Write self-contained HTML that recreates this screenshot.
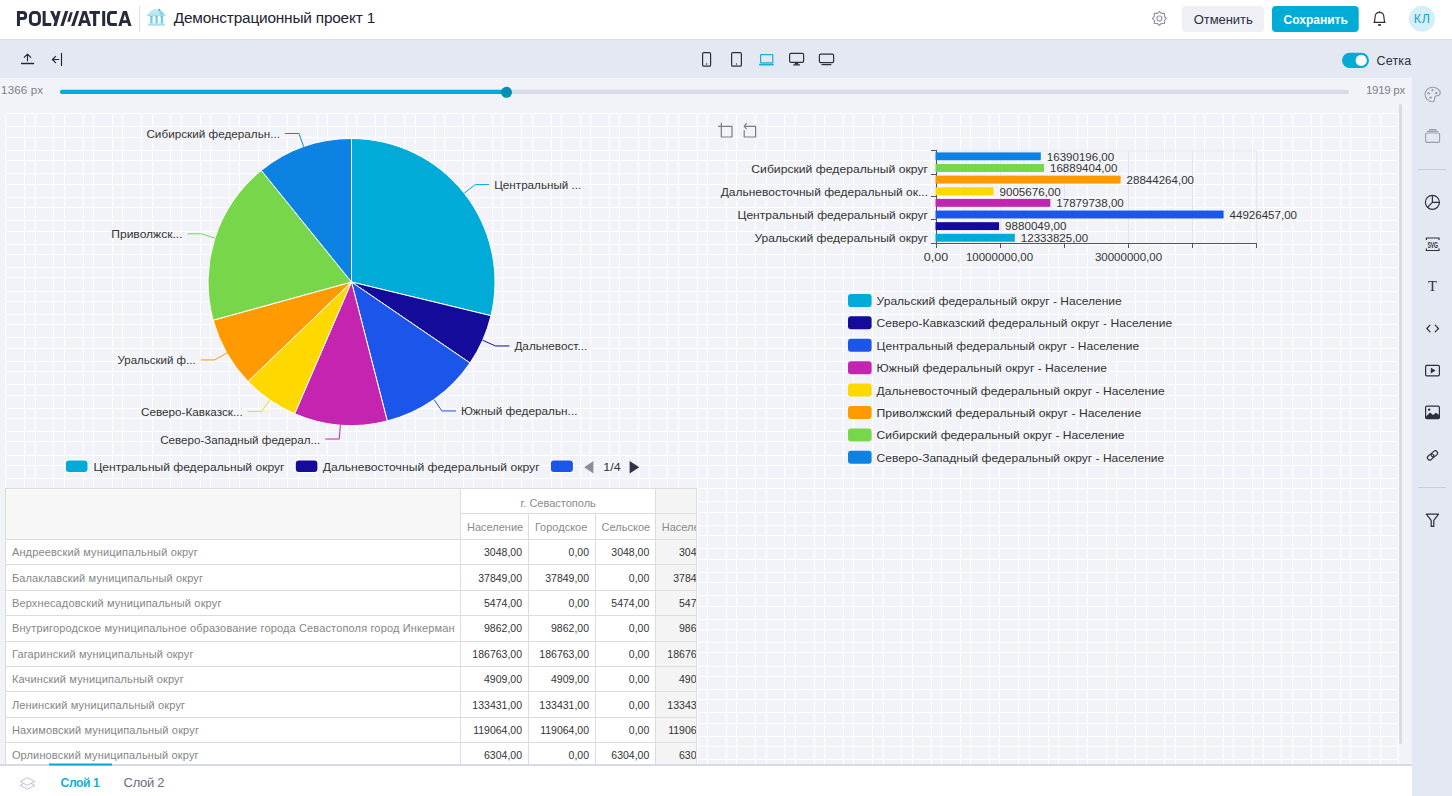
<!DOCTYPE html><html><head><meta charset="utf-8"><style>
*{margin:0;padding:0;box-sizing:border-box}
html,body{width:1452px;height:796px;overflow:hidden;background:#fff;font-family:"Liberation Sans", sans-serif}
.abs{position:absolute}
svg text{font-family:"Liberation Sans", sans-serif}

</style></head><body>
<div class="abs" style="left:0;top:0;width:1452px;height:40px;background:#fff;border-bottom:1px solid #dcdfe9"></div>
<div class="abs" style="left:0;top:40px;width:1452px;height:38px;background:#e4e8f2"></div>
<div class="abs" style="left:1412px;top:40px;width:40px;height:756px;background:#e4e8f2"></div>
<div class="abs" style="left:0;top:78px;width:1412px;height:686px;background:#f2f3f8"></div>
<div class="abs" style="left:0;top:764px;width:1412px;height:2px;background:#d8dbe7"></div>
<div class="abs" style="left:0;top:766px;width:1412px;height:30px;background:#fff"></div>
<svg class="abs" style="left:0;top:0" width="1452" height="796" viewBox="0 0 1452 796">
<g fill="#ffffff">
<rect x="5" y="113" width="1" height="651"/>
<rect x="24" y="113" width="1" height="651"/>
<rect x="35" y="113" width="1" height="651"/>
<rect x="53" y="113" width="1" height="651"/>
<rect x="64" y="113" width="1" height="651"/>
<rect x="83" y="113" width="1" height="651"/>
<rect x="93" y="113" width="1" height="651"/>
<rect x="112" y="113" width="1" height="651"/>
<rect x="122" y="113" width="1" height="651"/>
<rect x="141" y="113" width="1" height="651"/>
<rect x="152" y="113" width="1" height="651"/>
<rect x="170" y="113" width="1" height="651"/>
<rect x="181" y="113" width="1" height="651"/>
<rect x="200" y="113" width="1" height="651"/>
<rect x="210" y="113" width="1" height="651"/>
<rect x="229" y="113" width="1" height="651"/>
<rect x="239" y="113" width="1" height="651"/>
<rect x="258" y="113" width="1" height="651"/>
<rect x="269" y="113" width="1" height="651"/>
<rect x="287" y="113" width="1" height="651"/>
<rect x="298" y="113" width="1" height="651"/>
<rect x="317" y="113" width="1" height="651"/>
<rect x="327" y="113" width="1" height="651"/>
<rect x="346" y="113" width="1" height="651"/>
<rect x="356" y="113" width="1" height="651"/>
<rect x="375" y="113" width="1" height="651"/>
<rect x="385" y="113" width="1" height="651"/>
<rect x="404" y="113" width="1" height="651"/>
<rect x="415" y="113" width="1" height="651"/>
<rect x="434" y="113" width="1" height="651"/>
<rect x="444" y="113" width="1" height="651"/>
<rect x="463" y="113" width="1" height="651"/>
<rect x="473" y="113" width="1" height="651"/>
<rect x="492" y="113" width="1" height="651"/>
<rect x="502" y="113" width="1" height="651"/>
<rect x="521" y="113" width="1" height="651"/>
<rect x="532" y="113" width="1" height="651"/>
<rect x="551" y="113" width="1" height="651"/>
<rect x="561" y="113" width="1" height="651"/>
<rect x="580" y="113" width="1" height="651"/>
<rect x="590" y="113" width="1" height="651"/>
<rect x="609" y="113" width="1" height="651"/>
<rect x="619" y="113" width="1" height="651"/>
<rect x="638" y="113" width="1" height="651"/>
<rect x="649" y="113" width="1" height="651"/>
<rect x="667" y="113" width="1" height="651"/>
<rect x="678" y="113" width="1" height="651"/>
<rect x="697" y="113" width="1" height="651"/>
<rect x="707" y="113" width="1" height="651"/>
<rect x="726" y="113" width="1" height="651"/>
<rect x="736" y="113" width="1" height="651"/>
<rect x="755" y="113" width="1" height="651"/>
<rect x="766" y="113" width="1" height="651"/>
<rect x="784" y="113" width="1" height="651"/>
<rect x="795" y="113" width="1" height="651"/>
<rect x="814" y="113" width="1" height="651"/>
<rect x="824" y="113" width="1" height="651"/>
<rect x="843" y="113" width="1" height="651"/>
<rect x="853" y="113" width="1" height="651"/>
<rect x="872" y="113" width="1" height="651"/>
<rect x="883" y="113" width="1" height="651"/>
<rect x="901" y="113" width="1" height="651"/>
<rect x="912" y="113" width="1" height="651"/>
<rect x="931" y="113" width="1" height="651"/>
<rect x="941" y="113" width="1" height="651"/>
<rect x="960" y="113" width="1" height="651"/>
<rect x="970" y="113" width="1" height="651"/>
<rect x="989" y="113" width="1" height="651"/>
<rect x="999" y="113" width="1" height="651"/>
<rect x="1018" y="113" width="1" height="651"/>
<rect x="1029" y="113" width="1" height="651"/>
<rect x="1048" y="113" width="1" height="651"/>
<rect x="1058" y="113" width="1" height="651"/>
<rect x="1077" y="113" width="1" height="651"/>
<rect x="1087" y="113" width="1" height="651"/>
<rect x="1106" y="113" width="1" height="651"/>
<rect x="1116" y="113" width="1" height="651"/>
<rect x="1135" y="113" width="1" height="651"/>
<rect x="1146" y="113" width="1" height="651"/>
<rect x="1164" y="113" width="1" height="651"/>
<rect x="1175" y="113" width="1" height="651"/>
<rect x="1194" y="113" width="1" height="651"/>
<rect x="1204" y="113" width="1" height="651"/>
<rect x="1223" y="113" width="1" height="651"/>
<rect x="1233" y="113" width="1" height="651"/>
<rect x="1252" y="113" width="1" height="651"/>
<rect x="1263" y="113" width="1" height="651"/>
<rect x="1281" y="113" width="1" height="651"/>
<rect x="1292" y="113" width="1" height="651"/>
<rect x="1311" y="113" width="1" height="651"/>
<rect x="1321" y="113" width="1" height="651"/>
<rect x="1340" y="113" width="1" height="651"/>
<rect x="1350" y="113" width="1" height="651"/>
<rect x="1369" y="113" width="1" height="651"/>
<rect x="1380" y="113" width="1" height="651"/>
<rect x="1398" y="113" width="1" height="651"/>
<rect x="5" y="113" width="1394" height="1"/>
<rect x="5" y="126" width="1394" height="1"/>
<rect x="5" y="137" width="1394" height="1"/>
<rect x="5" y="150" width="1394" height="1"/>
<rect x="5" y="160" width="1394" height="1"/>
<rect x="5" y="173" width="1394" height="1"/>
<rect x="5" y="184" width="1394" height="1"/>
<rect x="5" y="197" width="1394" height="1"/>
<rect x="5" y="207" width="1394" height="1"/>
<rect x="5" y="220" width="1394" height="1"/>
<rect x="5" y="231" width="1394" height="1"/>
<rect x="5" y="244" width="1394" height="1"/>
<rect x="5" y="254" width="1394" height="1"/>
<rect x="5" y="267" width="1394" height="1"/>
<rect x="5" y="277" width="1394" height="1"/>
<rect x="5" y="291" width="1394" height="1"/>
<rect x="5" y="301" width="1394" height="1"/>
<rect x="5" y="314" width="1394" height="1"/>
<rect x="5" y="324" width="1394" height="1"/>
<rect x="5" y="337" width="1394" height="1"/>
<rect x="5" y="348" width="1394" height="1"/>
<rect x="5" y="361" width="1394" height="1"/>
<rect x="5" y="371" width="1394" height="1"/>
<rect x="5" y="384" width="1394" height="1"/>
<rect x="5" y="395" width="1394" height="1"/>
<rect x="5" y="408" width="1394" height="1"/>
<rect x="5" y="418" width="1394" height="1"/>
<rect x="5" y="431" width="1394" height="1"/>
<rect x="5" y="441" width="1394" height="1"/>
<rect x="5" y="455" width="1394" height="1"/>
<rect x="5" y="465" width="1394" height="1"/>
<rect x="5" y="478" width="1394" height="1"/>
<rect x="5" y="488" width="1394" height="1"/>
<rect x="5" y="501" width="1394" height="1"/>
<rect x="5" y="512" width="1394" height="1"/>
<rect x="5" y="525" width="1394" height="1"/>
<rect x="5" y="535" width="1394" height="1"/>
<rect x="5" y="548" width="1394" height="1"/>
<rect x="5" y="559" width="1394" height="1"/>
<rect x="5" y="572" width="1394" height="1"/>
<rect x="5" y="582" width="1394" height="1"/>
<rect x="5" y="595" width="1394" height="1"/>
<rect x="5" y="606" width="1394" height="1"/>
<rect x="5" y="619" width="1394" height="1"/>
<rect x="5" y="629" width="1394" height="1"/>
<rect x="5" y="642" width="1394" height="1"/>
<rect x="5" y="652" width="1394" height="1"/>
<rect x="5" y="666" width="1394" height="1"/>
<rect x="5" y="676" width="1394" height="1"/>
<rect x="5" y="689" width="1394" height="1"/>
<rect x="5" y="699" width="1394" height="1"/>
<rect x="5" y="712" width="1394" height="1"/>
<rect x="5" y="723" width="1394" height="1"/>
<rect x="5" y="736" width="1394" height="1"/>
<rect x="5" y="746" width="1394" height="1"/>
<rect x="5" y="759" width="1394" height="1"/>
</g>
<path d="M351.50 282.00 L351.50 138.50 A143.50 143.50 0 0 1 490.99 315.69 Z" fill="#00acd7" stroke="#fff" stroke-width="1" stroke-linejoin="round"/>
<polyline points="464.25,193.24 475.25,184.58 489.25,184.58" fill="none" stroke="#00acd7" stroke-width="1"/>
<text x="494.25" y="185.08" font-size="11.5" fill="#333" dominant-baseline="central" textLength="87.0" lengthAdjust="spacingAndGlyphs">Центральный ...</text>
<path d="M351.50 282.00 L490.99 315.69 A143.50 143.50 0 0 1 469.99 362.95 Z" fill="#140b9b" stroke="#fff" stroke-width="1" stroke-linejoin="round"/>
<polyline points="482.64,340.27 495.43,345.96 509.43,345.96" fill="none" stroke="#140b9b" stroke-width="1"/>
<text x="514.43" y="346.46" font-size="11.5" fill="#333" dominant-baseline="central" textLength="72.8" lengthAdjust="spacingAndGlyphs">Дальневост...</text>
<path d="M351.50 282.00 L469.99 362.95 A143.50 143.50 0 0 1 387.28 420.97 Z" fill="#1c55ea" stroke="#fff" stroke-width="1" stroke-linejoin="round"/>
<polyline points="433.91,399.48 441.95,410.94 455.95,410.94" fill="none" stroke="#1c55ea" stroke-width="1"/>
<text x="460.95" y="411.44" font-size="11.5" fill="#333" dominant-baseline="central" textLength="116.5" lengthAdjust="spacingAndGlyphs">Южный федеральн...</text>
<path d="M351.50 282.00 L387.28 420.97 A143.50 143.50 0 0 1 294.63 413.75 Z" fill="#c524b0" stroke="#fff" stroke-width="1" stroke-linejoin="round"/>
<polyline points="340.35,425.07 339.27,439.02 325.27,439.02" fill="none" stroke="#c524b0" stroke-width="1"/>
<text x="160.17" y="439.52" font-size="11.5" fill="#333" dominant-baseline="central" textLength="160.1" lengthAdjust="spacingAndGlyphs">Северо-Западный федерал...</text>
<path d="M351.50 282.00 L294.63 413.75 A143.50 143.50 0 0 1 248.05 381.46 Z" fill="#ffd800" stroke="#fff" stroke-width="1" stroke-linejoin="round"/>
<polyline points="269.73,399.92 261.75,411.43 247.75,411.43" fill="none" stroke="#ffd800" stroke-width="1"/>
<text x="140.95" y="411.93" font-size="11.5" fill="#333" dominant-baseline="central" textLength="101.8" lengthAdjust="spacingAndGlyphs">Северо-Кавказск...</text>
<path d="M351.50 282.00 L248.05 381.46 A143.50 143.50 0 0 1 213.18 320.20 Z" fill="#ff9a00" stroke="#fff" stroke-width="1" stroke-linejoin="round"/>
<polyline points="226.80,353.00 214.63,359.93 200.63,359.93" fill="none" stroke="#ff9a00" stroke-width="1"/>
<text x="117.53" y="360.43" font-size="11.5" fill="#333" dominant-baseline="central" textLength="78.1" lengthAdjust="spacingAndGlyphs">Уральский ф...</text>
<path d="M351.50 282.00 L213.18 320.20 A143.50 143.50 0 0 1 261.31 170.38 Z" fill="#78d64b" stroke="#fff" stroke-width="1" stroke-linejoin="round"/>
<polyline points="214.88,238.10 201.55,233.82 187.55,233.82" fill="none" stroke="#78d64b" stroke-width="1"/>
<text x="111.25" y="234.32" font-size="11.5" fill="#333" dominant-baseline="central" textLength="71.3" lengthAdjust="spacingAndGlyphs">Приволжск...</text>
<path d="M351.50 282.00 L261.31 170.38 A143.50 143.50 0 0 1 351.50 138.50 Z" fill="#0c82e2" stroke="#fff" stroke-width="1" stroke-linejoin="round"/>
<polyline points="303.67,146.71 299.01,133.51 285.01,133.51" fill="none" stroke="#0c82e2" stroke-width="1"/>
<text x="146.41" y="134.01" font-size="11.5" fill="#333" dominant-baseline="central" textLength="133.6" lengthAdjust="spacingAndGlyphs">Сибирский федеральн...</text>
<rect x="64.80" y="459.40" width="23.80" height="13.70" rx="4" fill="#fff"/>
<rect x="65.90" y="460.50" width="21.60" height="11.50" rx="3" fill="#00acd7"/>
<text x="93.40" y="466.50" font-size="11.5" fill="#333" dominant-baseline="central" textLength="191.0" lengthAdjust="spacingAndGlyphs">Центральный федеральный округ</text>
<rect x="294.70" y="459.40" width="23.80" height="13.70" rx="4" fill="#fff"/>
<rect x="295.80" y="460.50" width="21.60" height="11.50" rx="3" fill="#140b9b"/>
<text x="322.70" y="466.50" font-size="11.5" fill="#333" dominant-baseline="central" textLength="216.9" lengthAdjust="spacingAndGlyphs">Дальневосточный федеральный округ</text>
<rect x="549.80" y="459.40" width="24.20" height="13.70" rx="4" fill="#fff"/>
<rect x="550.90" y="460.50" width="22.00" height="11.50" rx="3" fill="#1c55ea"/>
<path d="M593.4 461 L593.4 473.5 L584.2 467.2 Z" fill="#8a8d98"/>
<text x="603.30" y="466.50" font-size="11.5" fill="#333" dominant-baseline="central" textLength="17.4" lengthAdjust="spacingAndGlyphs">1/4</text>
<path d="M629.6 461 L629.6 473.5 L639.3 467.2 Z" fill="#2f3243"/>
<rect x="999.86" y="150.9" width="1" height="92.4" fill="#e0e6f1"/>
<rect x="1063.92" y="150.9" width="1" height="92.4" fill="#e0e6f1"/>
<rect x="1127.98" y="150.9" width="1" height="92.4" fill="#e0e6f1"/>
<rect x="1192.04" y="150.9" width="1" height="92.4" fill="#e0e6f1"/>
<rect x="1256.10" y="150.9" width="1" height="92.4" fill="#e0e6f1"/>
<rect x="936" y="150.4" width="321" height="1" fill="#e0e6f1"/>
<rect x="936" y="150" width="1" height="94" fill="#50535f"/>
<rect x="931" y="243" width="326" height="1" fill="#50535f"/>
<rect x="931" y="150" width="5" height="1" fill="#50535f"/>
<rect x="931" y="174" width="5" height="1" fill="#50535f"/>
<rect x="931" y="196" width="5" height="1" fill="#50535f"/>
<rect x="931" y="219" width="5" height="1" fill="#50535f"/>
<rect x="936" y="243" width="1" height="5" fill="#50535f"/>
<rect x="1000" y="243" width="1" height="5" fill="#50535f"/>
<rect x="1064" y="243" width="1" height="5" fill="#50535f"/>
<rect x="1128" y="243" width="1" height="5" fill="#50535f"/>
<rect x="1192" y="243" width="1" height="5" fill="#50535f"/>
<rect x="1256" y="243" width="1" height="5" fill="#50535f"/>
<rect x="935.5" y="152.40" width="105.30" height="7.9" fill="#0c82e2"/>
<text x="1046.80" y="156.65" font-size="11.5" fill="#333" dominant-baseline="central" textLength="67.4" lengthAdjust="spacingAndGlyphs">16390196,00</text>
<rect x="935.5" y="164.03" width="108.49" height="7.9" fill="#78d64b"/>
<text x="1049.99" y="168.28" font-size="11.5" fill="#333" dominant-baseline="central" textLength="67.4" lengthAdjust="spacingAndGlyphs">16889404,00</text>
<rect x="935.5" y="175.66" width="185.08" height="7.9" fill="#ff9a00"/>
<text x="1126.58" y="179.91" font-size="11.5" fill="#333" dominant-baseline="central" textLength="67.4" lengthAdjust="spacingAndGlyphs">28844264,00</text>
<rect x="935.5" y="187.29" width="57.99" height="7.9" fill="#ffd800"/>
<text x="999.49" y="191.54" font-size="11.5" fill="#333" dominant-baseline="central" textLength="61.3" lengthAdjust="spacingAndGlyphs">9005676,00</text>
<rect x="935.5" y="198.92" width="114.84" height="7.9" fill="#c524b0"/>
<text x="1056.34" y="203.17" font-size="11.5" fill="#333" dominant-baseline="central" textLength="67.4" lengthAdjust="spacingAndGlyphs">17879738,00</text>
<rect x="935.5" y="210.55" width="288.10" height="7.9" fill="#1c55ea"/>
<text x="1229.60" y="214.80" font-size="11.5" fill="#333" dominant-baseline="central" textLength="67.4" lengthAdjust="spacingAndGlyphs">44926457,00</text>
<rect x="935.5" y="222.18" width="63.59" height="7.9" fill="#140b9b"/>
<text x="1005.09" y="226.43" font-size="11.5" fill="#333" dominant-baseline="central" textLength="61.3" lengthAdjust="spacingAndGlyphs">9880049,00</text>
<rect x="935.5" y="233.81" width="79.31" height="7.9" fill="#00acd7"/>
<text x="1020.81" y="238.06" font-size="11.5" fill="#333" dominant-baseline="central" textLength="67.4" lengthAdjust="spacingAndGlyphs">12333825,00</text>
<text x="751.30" y="168.70" font-size="11.5" fill="#333" dominant-baseline="central" textLength="176.7" lengthAdjust="spacingAndGlyphs">Сибирский федеральный округ</text>
<text x="720.70" y="191.80" font-size="11.5" fill="#333" dominant-baseline="central" textLength="207.3" lengthAdjust="spacingAndGlyphs">Дальневосточный федеральный ок...</text>
<text x="737.50" y="214.90" font-size="11.5" fill="#333" dominant-baseline="central" textLength="190.5" lengthAdjust="spacingAndGlyphs">Центральный федеральный округ</text>
<text x="754.40" y="238.00" font-size="11.5" fill="#333" dominant-baseline="central" textLength="173.6" lengthAdjust="spacingAndGlyphs">Уральский федеральный округ</text>
<text x="923.80" y="257.00" font-size="11.5" fill="#333" dominant-baseline="central" textLength="24.4" lengthAdjust="spacingAndGlyphs">0,00</text>
<text x="965.95" y="257.00" font-size="11.5" fill="#333" dominant-baseline="central" textLength="67.1" lengthAdjust="spacingAndGlyphs">10000000,00</text>
<text x="1094.95" y="257.00" font-size="11.5" fill="#333" dominant-baseline="central" textLength="67.1" lengthAdjust="spacingAndGlyphs">30000000,00</text>
<rect x="848" y="293.90" width="23.6" height="13" rx="3" fill="#00acd7"/>
<text x="876.60" y="300.90" font-size="11.5" fill="#333" dominant-baseline="central" textLength="245.2" lengthAdjust="spacingAndGlyphs">Уральский федеральный округ - Население</text>
<rect x="848" y="316.32" width="23.6" height="13" rx="3" fill="#140b9b"/>
<text x="876.60" y="323.32" font-size="11.5" fill="#333" dominant-baseline="central" textLength="295.6" lengthAdjust="spacingAndGlyphs">Северо-Кавказский федеральный округ - Население</text>
<rect x="848" y="338.74" width="23.6" height="13" rx="3" fill="#1c55ea"/>
<text x="876.60" y="345.74" font-size="11.5" fill="#333" dominant-baseline="central" textLength="262.6" lengthAdjust="spacingAndGlyphs">Центральный федеральный округ - Население</text>
<rect x="848" y="361.16" width="23.6" height="13" rx="3" fill="#c524b0"/>
<text x="876.60" y="368.16" font-size="11.5" fill="#333" dominant-baseline="central" textLength="230.4" lengthAdjust="spacingAndGlyphs">Южный федеральный округ - Население</text>
<rect x="848" y="383.58" width="23.6" height="13" rx="3" fill="#ffd800"/>
<text x="876.60" y="390.58" font-size="11.5" fill="#333" dominant-baseline="central" textLength="288.1" lengthAdjust="spacingAndGlyphs">Дальневосточный федеральный округ - Население</text>
<rect x="848" y="406.00" width="23.6" height="13" rx="3" fill="#ff9a00"/>
<text x="876.60" y="413.00" font-size="11.5" fill="#333" dominant-baseline="central" textLength="264.6" lengthAdjust="spacingAndGlyphs">Приволжский федеральный округ - Население</text>
<rect x="848" y="428.42" width="23.6" height="13" rx="3" fill="#78d64b"/>
<text x="876.60" y="435.42" font-size="11.5" fill="#333" dominant-baseline="central" textLength="248.0" lengthAdjust="spacingAndGlyphs">Сибирский федеральный округ - Население</text>
<rect x="848" y="450.84" width="23.6" height="13" rx="3" fill="#0c82e2"/>
<text x="876.60" y="457.84" font-size="11.5" fill="#333" dominant-baseline="central" textLength="287.6" lengthAdjust="spacingAndGlyphs">Северо-Западный федеральный округ - Население</text>
<svg x="0" y="0" width="1452" height="796"><defs><clipPath id="tclip"><rect x="5" y="488" width="692" height="276"/></clipPath></defs><g clip-path="url(#tclip)">
<rect x="5" y="488" width="692" height="300" fill="#fff"/>
<rect x="5" y="488" width="455" height="51" fill="#f7f7f7"/>
<rect x="655" y="488" width="42" height="400" fill="#f4f4f4"/>
<rect x="5" y="488" width="692" height="1" fill="#dcdcdc"/>
<rect x="5" y="539" width="692" height="1" fill="#dcdcdc"/>
<rect x="5" y="564" width="692" height="1" fill="#dcdcdc"/>
<rect x="5" y="590" width="692" height="1" fill="#dcdcdc"/>
<rect x="5" y="615" width="692" height="1" fill="#dcdcdc"/>
<rect x="5" y="641" width="692" height="1" fill="#dcdcdc"/>
<rect x="5" y="666" width="692" height="1" fill="#dcdcdc"/>
<rect x="5" y="691" width="692" height="1" fill="#dcdcdc"/>
<rect x="5" y="717" width="692" height="1" fill="#dcdcdc"/>
<rect x="5" y="742" width="692" height="1" fill="#dcdcdc"/>
<rect x="5" y="768" width="692" height="1" fill="#dcdcdc"/>
<rect x="460" y="513" width="237" height="1" fill="#dcdcdc"/>
<rect x="5" y="488" width="1" height="300" fill="#dcdcdc"/>
<rect x="460" y="488" width="1" height="300" fill="#dcdcdc"/>
<rect x="528" y="513" width="1" height="300" fill="#dcdcdc"/>
<rect x="595" y="513" width="1" height="300" fill="#dcdcdc"/>
<rect x="655" y="488" width="1" height="300" fill="#dcdcdc"/>
<text x="520.6" y="502.5" font-size="11" fill="#8a8a8a" dominant-baseline="central">г. Севастополь</text>
<text x="467.0" y="527" font-size="11" fill="#8a8a8a" dominant-baseline="central">Население</text>
<text x="534.9" y="527" font-size="11" fill="#8a8a8a" dominant-baseline="central">Городское</text>
<text x="601.6" y="527" font-size="11" fill="#8a8a8a" dominant-baseline="central">Сельское</text>
<text x="661.8" y="527" font-size="11" fill="#8a8a8a" dominant-baseline="central">Население</text>
<text x="11.9" y="552.2" font-size="11" fill="#868686" dominant-baseline="central" textLength="185.8" lengthAdjust="spacing">Андреевский муниципальный округ</text>
<text x="522.0" y="552.2" font-size="10.5" fill="#333" text-anchor="end" dominant-baseline="central">3048,00</text>
<text x="589.0" y="552.2" font-size="10.5" fill="#333" text-anchor="end" dominant-baseline="central">0,00</text>
<text x="649.3" y="552.2" font-size="10.5" fill="#333" text-anchor="end" dominant-baseline="central">3048,00</text>
<text x="717.0" y="552.2" font-size="10.5" fill="#333" text-anchor="end" dominant-baseline="central">3048,00</text>
<text x="11.9" y="577.6" font-size="11" fill="#868686" dominant-baseline="central" textLength="191.1" lengthAdjust="spacing">Балаклавский муниципальный округ</text>
<text x="522.0" y="577.6" font-size="10.5" fill="#333" text-anchor="end" dominant-baseline="central">37849,00</text>
<text x="589.0" y="577.6" font-size="10.5" fill="#333" text-anchor="end" dominant-baseline="central">37849,00</text>
<text x="649.3" y="577.6" font-size="10.5" fill="#333" text-anchor="end" dominant-baseline="central">0,00</text>
<text x="717.0" y="577.6" font-size="10.5" fill="#333" text-anchor="end" dominant-baseline="central">37849,00</text>
<text x="11.9" y="603.0" font-size="11" fill="#868686" dominant-baseline="central" textLength="209.5" lengthAdjust="spacing">Верхнесадовский муниципальный округ</text>
<text x="522.0" y="603.0" font-size="10.5" fill="#333" text-anchor="end" dominant-baseline="central">5474,00</text>
<text x="589.0" y="603.0" font-size="10.5" fill="#333" text-anchor="end" dominant-baseline="central">0,00</text>
<text x="649.3" y="603.0" font-size="10.5" fill="#333" text-anchor="end" dominant-baseline="central">5474,00</text>
<text x="717.0" y="603.0" font-size="10.5" fill="#333" text-anchor="end" dominant-baseline="central">5474,00</text>
<text x="11.9" y="628.4" font-size="11" fill="#868686" dominant-baseline="central" textLength="442.7" lengthAdjust="spacing">Внутригородское муниципальное образование города Севастополя город Инкерман</text>
<text x="522.0" y="628.4" font-size="10.5" fill="#333" text-anchor="end" dominant-baseline="central">9862,00</text>
<text x="589.0" y="628.4" font-size="10.5" fill="#333" text-anchor="end" dominant-baseline="central">9862,00</text>
<text x="649.3" y="628.4" font-size="10.5" fill="#333" text-anchor="end" dominant-baseline="central">0,00</text>
<text x="717.0" y="628.4" font-size="10.5" fill="#333" text-anchor="end" dominant-baseline="central">9862,00</text>
<text x="11.9" y="653.8" font-size="11" fill="#868686" dominant-baseline="central" textLength="181.5" lengthAdjust="spacing">Гагаринский муниципальный округ</text>
<text x="522.0" y="653.8" font-size="10.5" fill="#333" text-anchor="end" dominant-baseline="central">186763,00</text>
<text x="589.0" y="653.8" font-size="10.5" fill="#333" text-anchor="end" dominant-baseline="central">186763,00</text>
<text x="649.3" y="653.8" font-size="10.5" fill="#333" text-anchor="end" dominant-baseline="central">0,00</text>
<text x="717.0" y="653.8" font-size="10.5" fill="#333" text-anchor="end" dominant-baseline="central">186763,00</text>
<text x="11.9" y="679.2" font-size="11" fill="#868686" dominant-baseline="central" textLength="171.8" lengthAdjust="spacing">Качинский муниципальный округ</text>
<text x="522.0" y="679.2" font-size="10.5" fill="#333" text-anchor="end" dominant-baseline="central">4909,00</text>
<text x="589.0" y="679.2" font-size="10.5" fill="#333" text-anchor="end" dominant-baseline="central">4909,00</text>
<text x="649.3" y="679.2" font-size="10.5" fill="#333" text-anchor="end" dominant-baseline="central">0,00</text>
<text x="717.0" y="679.2" font-size="10.5" fill="#333" text-anchor="end" dominant-baseline="central">4909,00</text>
<text x="11.9" y="704.6" font-size="11" fill="#868686" dominant-baseline="central" textLength="173.2" lengthAdjust="spacing">Ленинский муниципальный округ</text>
<text x="522.0" y="704.6" font-size="10.5" fill="#333" text-anchor="end" dominant-baseline="central">133431,00</text>
<text x="589.0" y="704.6" font-size="10.5" fill="#333" text-anchor="end" dominant-baseline="central">133431,00</text>
<text x="649.3" y="704.6" font-size="10.5" fill="#333" text-anchor="end" dominant-baseline="central">0,00</text>
<text x="717.0" y="704.6" font-size="10.5" fill="#333" text-anchor="end" dominant-baseline="central">133431,00</text>
<text x="11.9" y="730.0" font-size="11" fill="#868686" dominant-baseline="central" textLength="187.0" lengthAdjust="spacing">Нахимовский муниципальный округ</text>
<text x="522.0" y="730.0" font-size="10.5" fill="#333" text-anchor="end" dominant-baseline="central">119064,00</text>
<text x="589.0" y="730.0" font-size="10.5" fill="#333" text-anchor="end" dominant-baseline="central">119064,00</text>
<text x="649.3" y="730.0" font-size="10.5" fill="#333" text-anchor="end" dominant-baseline="central">0,00</text>
<text x="717.0" y="730.0" font-size="10.5" fill="#333" text-anchor="end" dominant-baseline="central">119064,00</text>
<text x="11.9" y="755.4" font-size="11" fill="#868686" dominant-baseline="central" textLength="186.7" lengthAdjust="spacing">Орлиновский муниципальный округ</text>
<text x="522.0" y="755.4" font-size="10.5" fill="#333" text-anchor="end" dominant-baseline="central">6304,00</text>
<text x="589.0" y="755.4" font-size="10.5" fill="#333" text-anchor="end" dominant-baseline="central">0,00</text>
<text x="649.3" y="755.4" font-size="10.5" fill="#333" text-anchor="end" dominant-baseline="central">6304,00</text>
<text x="717.0" y="755.4" font-size="10.5" fill="#333" text-anchor="end" dominant-baseline="central">6304,00</text>
<rect x="696" y="488" width="1" height="300" fill="#dcdcdc"/>
</g></svg>
<g fill="none" stroke="#262a3b" stroke-width="3">
<path d="M18.45 26 V12.5 H23 C24.7 12.5 25.7 13.8 25.7 15.6 C25.7 17.4 24.7 18.6 23 18.6 H18.45"/>
<rect x="30.4" y="12.5" width="9" height="12" rx="3.6"/>
<path d="M44.15 11 V24.5 H51.3"/>
<path d="M116.9 12.5 H111.7 C109.6 12.5 108.5 13.8 108.5 16 V21 C108.5 23.2 109.6 24.5 111.7 24.5 H116.9"/>
</g>
<g fill="#262a3b">
<path d="M50 11 L53.3 11 L55.9 16.75 L57.5 11 L60.7 11 L56.6 26 L53.3 26 L54.6 21.2 Z"/>
<path d="M65.1 11 L68.3 11 L63.5 26 L60.3 26 Z"/>
<path d="M70.1 12.2 L72.8 12.2 L69.9 21.7 L67.2 21.7 Z"/>
<path d="M76.3 11 L79.2 11 L74.4 26 L71.1 26 Z"/>
<path transform="translate(0.0 0)" fill-rule="evenodd" d="M77.9 26 L82.6 11 L86.4 11 L91.1 26 L87.9 26 L87.0 23 L81.9 23 L81.1 26 Z M82.7 20.2 L86.2 20.2 L84.45 14.2 Z"/>
<path transform="translate(40.4 0)" fill-rule="evenodd" d="M77.9 26 L82.6 11 L86.4 11 L91.1 26 L87.9 26 L87.0 23 L81.9 23 L81.1 26 Z M82.7 20.2 L86.2 20.2 L84.45 14.2 Z"/>
<rect x="89.4" y="11" width="10.6" height="2.9"/>
<rect x="93.1" y="11" width="3.1" height="15"/>
<rect x="102.2" y="11" width="3" height="15"/>
</g>
<rect x="139" y="6" width="1" height="26" fill="#dfe2ea"/>
<g>
<path d="M146.8 15.8 C148.6 12.6 151.8 8.9 156.2 8.9 C160.4 8.9 163.6 12.6 165.3 15.8 Z" fill="#bfe8f3"/>
<path d="M158.2 9.2 C161.2 10 163.8 12.8 165.3 15.8 L160.6 15.8 C160 13.2 159 11 158.2 9.2 Z" fill="#86d5e8"/>
<circle cx="159.3" cy="9.8" r="1" fill="#3cbad8"/>
<rect x="146.8" y="14.6" width="18.5" height="1.3" fill="#9edcec"/>
<path d="M149.6 16 L153.2 16 L152.5 17.4 L152.5 22.2 L153.2 23.6 L149.6 23.6 L150.3 22.2 L150.3 17.4 Z" fill="#6fcde3"/>
<path d="M154.8 16 L158.4 16 L157.7 17.4 L157.7 22.2 L158.4 23.6 L154.8 23.6 L155.5 22.2 L155.5 17.4 Z" fill="#6fcde3"/>
<path d="M160.1 16 L163.7 16 L163.0 17.4 L163.0 22.2 L163.7 23.6 L160.1 23.6 L160.8 22.2 L160.8 17.4 Z" fill="#6fcde3"/>
<rect x="148" y="23.4" width="16.9" height="2.4" rx="0.5" fill="#a6e0ef"/>
</g>
<text x="173.7" y="23.2" font-size="15.4" fill="#1f2233" textLength="201.5" lengthAdjust="spacing">Демонстрационный проект 1</text>
<g transform="translate(1159.4 18.4)" fill="none" stroke="#8f94a8" stroke-width="1.15">
<path d="M0 -7 L1.9 -5.1 L5.1 -5.1 L5.1 -1.9 L7 0 L5.1 1.9 L5.1 5.1 L1.9 5.1 L0 7 L-1.9 5.1 L-5.1 5.1 L-5.1 1.9 L-7 0 L-5.1 -1.9 L-5.1 -5.1 L-1.9 -5.1 Z" stroke-linejoin="round"/>
<rect x="-2.4" y="-2.4" width="4.8" height="4.8" rx="1.6"/>
</g>
<rect x="1182" y="6" width="82" height="26" rx="4" fill="#eef0f5"/>
<text x="1193.7" y="23.5" font-size="13" fill="#2b2f3e" textLength="59" lengthAdjust="spacing">Отменить</text>
<rect x="1272" y="6" width="86.7" height="26" rx="4" fill="#00acd6"/>
<text x="1283.5" y="23.5" font-size="12.8" font-weight="bold" fill="#fff" textLength="64.3" lengthAdjust="spacingAndGlyphs">Сохранить</text>
<g fill="none" stroke="#2b2f3e" stroke-width="1.15" stroke-linejoin="round">
<path d="M1373.5 22.4 L1385.5 22.4 M1374.4 22.4 L1375.3 15.6 C1375.6 13.4 1377.3 12.3 1379.5 12.3 C1381.7 12.3 1383.4 13.4 1383.7 15.6 L1384.6 22.4"/>
<rect x="1378.1" y="24.1" width="2.8" height="1.7" fill="#2b2f3e" stroke="none"/>
<circle cx="1379.5" cy="11.9" r="0.7" fill="#2b2f3e" stroke="none"/>
</g>
<circle cx="1422" cy="18.8" r="13" fill="#d3eff7"/>
<text x="1413.8" y="23.3" font-size="12.5" fill="#1aa3c9" textLength="16.2" lengthAdjust="spacing">КЛ</text>
<g fill="none" stroke="#23263a" stroke-width="1.15" stroke-linecap="round" stroke-linejoin="round">
<path d="M27.5 54.2 L27.5 60.8 M24.2 57.4 L27.5 54.2 L30.8 57.4"/>
<path d="M21.6 63.5 L33.6 63.5" stroke-width="1.35"/>
<path d="M61.5 53.4 L61.5 65.4"/>
<path d="M52.4 59.5 L58.8 59.5 M55.6 56.3 L52.4 59.5 L55.6 62.7"/>
</g>
<g fill="none" stroke="#2b2f3e" stroke-width="1.2">
<rect x="702.6" y="52.6" width="8" height="13.6" rx="1.3"/>
<rect x="731.6" y="52.6" width="9.8" height="13.6" rx="1.3"/>
<rect x="789.6" y="53.3" width="14" height="9" rx="1.3"/>
<rect x="819.4" y="54.2" width="14.2" height="8.4" rx="1.3"/>
</g>
<circle cx="706.6" cy="64" r="0.7" fill="#2b2f3e"/><circle cx="736.5" cy="64" r="0.7" fill="#2b2f3e"/>
<rect x="794.8" y="63" width="3.4" height="1.6" fill="#2b2f3e"/><rect x="793.2" y="64.2" width="6.8" height="1.2" rx="0.5" fill="#2b2f3e"/>
<rect x="821.4" y="64" width="10" height="1.2" rx="0.5" fill="#2b2f3e"/>
<rect x="760.6" y="54.6" width="12.2" height="8.2" rx="0.6" fill="none" stroke="#1aaed6" stroke-width="1.2"/>
<rect x="759" y="63.8" width="14.8" height="1.6" rx="0.6" fill="#1aaed6"/>
<rect x="1342" y="52.8" width="27" height="15.2" rx="7.6" fill="#00acd6"/>
<circle cx="1361.2" cy="60.4" r="5.6" fill="#fff"/>
<text x="1376.6" y="65" font-size="12.5" fill="#2b2f3e" textLength="34.6" lengthAdjust="spacing">Сетка</text>
<text x="1.1" y="94" font-size="11.5" fill="#7b7e8c" textLength="41.9" lengthAdjust="spacing">1366 px</text>
<rect x="60" y="89.8" width="1289" height="4.1" rx="2" fill="#d8dbe7"/>
<rect x="60" y="89.8" width="447" height="4.1" rx="2" fill="#00acd6"/>
<circle cx="506.5" cy="92.3" r="5.5" fill="#0090b6"/>
<text x="1365.9" y="94.3" font-size="11.5" fill="#7b7e8c" textLength="39.3" lengthAdjust="spacing">1919 px</text>
<rect x="1399" y="104" width="3" height="640" rx="1.5" fill="#d8dbe7"/>
<g fill="none" stroke="#7b7d86" stroke-width="1.2">
<path d="M717.9 126.3 L732 126.3 L732 137 L721.3 137 L721.3 122.7"/>
<path d="M744.2 130.2 L744.2 137 L755.6 137 L755.6 126.3 L744.4 126.3 M746.6 123.2 L744.2 126.3 L746.6 129.2"/>
</g>
<path d="M27.4 781.5 L34.8 785.4 L27.4 789.2 L20.2 785.4 Z" fill="none" stroke="#b3bad3" stroke-width="0.9" stroke-linejoin="round"/>
<path d="M27.4 777.7 L34.8 781.5 L27.4 785.4 L20.2 781.5 Z" fill="#fff" stroke="#b3bad3" stroke-width="0.9" stroke-linejoin="round"/>
<rect x="49" y="763.5" width="63" height="2" fill="#00acd6"/>
<text x="60.6" y="787" font-size="12.2" font-weight="bold" fill="#1aaed6" textLength="39.3" lengthAdjust="spacing">Слой 1</text>
<text x="123.6" y="787" font-size="13" fill="#686d80" textLength="40.8" lengthAdjust="spacing">Слой 2</text>
<rect x="1418" y="169" width="28" height="1" fill="#c9cedf"/>
<rect x="1418" y="487" width="28" height="1" fill="#c9cedf"/>
<g fill="none" stroke="#9a9dab" stroke-width="1.1">
<path d="M1432.6 87.2 C1436.9 87.2 1440.2 89.9 1440.2 93.1 C1440.2 95.3 1438.5 95.7 1437 95.7 C1435.3 95.7 1434.6 97 1434.6 98.4 C1434.6 100.5 1433.8 101.8 1432.6 101.8 C1428.6 101.8 1425.1 98.6 1425.1 94.5 C1425.1 90.4 1428.4 87.2 1432.6 87.2 Z"/>
</g>
<g fill="#9a9dab"><circle cx="1432.5" cy="90.1" r="1.2"/><circle cx="1428.7" cy="93.3" r="1.2"/><circle cx="1436.3" cy="93" r="1.2"/><circle cx="1430.6" cy="97.6" r="1.2"/></g>
<g fill="none" stroke="#9a9dab" stroke-width="1.1">
<rect x="1425.6" y="133" width="14" height="9.4" rx="1.3"/>
<path d="M1427 131.4 L1438.2 131.4"/>
</g>
<rect x="1429" y="129" width="7.5" height="1.5" fill="#9a9dab"/>
<g fill="none" stroke="#2b2f3e" stroke-width="1.2">
<circle cx="1432.4" cy="202.3" r="7"/>
<path d="M1432.4 195.3 L1432.4 202.3 L1439.4 202.3 M1432.4 202.3 L1427.4 207.3"/>
</g>
<g fill="none" stroke="#2b2f3e" stroke-width="1.2">
<path d="M1426.4 240 L1426.4 238 L1439 238 L1439 240"/>
<path d="M1426.4 248.4 L1426.4 250.5 L1439 250.5 L1439 248.4"/>
</g>
<text x="1432.7" y="247.5" font-size="8.2" font-weight="bold" fill="#2b2f3e" text-anchor="middle" textLength="10.6" lengthAdjust="spacingAndGlyphs">SVG</text>
<text x="1432.4" y="291.3" font-size="14.5" style="font-family:Liberation Serif,serif" fill="#2b2f3e" text-anchor="middle">T</text>
<g fill="none" stroke="#2b2f3e" stroke-width="1.2" stroke-linecap="round" stroke-linejoin="round">
<path d="M1430 325.2 L1426.8 328.5 L1430 331.8 M1435.2 325.2 L1438.5 328.5 L1435.2 331.8"/>
</g>
<rect x="1425.6" y="365.4" width="13.8" height="10.4" rx="1.3" fill="none" stroke="#2b2f3e" stroke-width="1.2"/>
<path d="M1430.8 367.8 L1435.6 370.6 L1430.8 373.4 Z" fill="#2b2f3e"/>
<rect x="1425.6" y="406.2" width="13.8" height="12.4" rx="1.3" fill="none" stroke="#2b2f3e" stroke-width="1.2"/>
<path d="M1425.6 417 L1430 412.6 L1433 415 L1436 412.8 L1439.4 415.2 L1439.4 418.6 L1425.6 418.6 Z" fill="#2b2f3e"/>
<circle cx="1429.2" cy="409.6" r="1.2" fill="#2b2f3e"/>
<g fill="none" stroke="#2b2f3e" stroke-width="1.15" transform="rotate(-40 1432.5 455.4)">
<rect x="1426.6" y="453.1" width="7" height="4.6" rx="2.3"/>
<rect x="1431.4" y="453.1" width="7" height="4.6" rx="2.3"/>
</g>
<path d="M1426.3 514.2 L1438.6 514.2 L1433.8 520.4 L1433.8 526.4 L1431.2 526.4 L1431.2 520.4 Z" fill="none" stroke="#2b2f3e" stroke-width="1.2" stroke-linejoin="round"/>
</svg>
</body></html>
